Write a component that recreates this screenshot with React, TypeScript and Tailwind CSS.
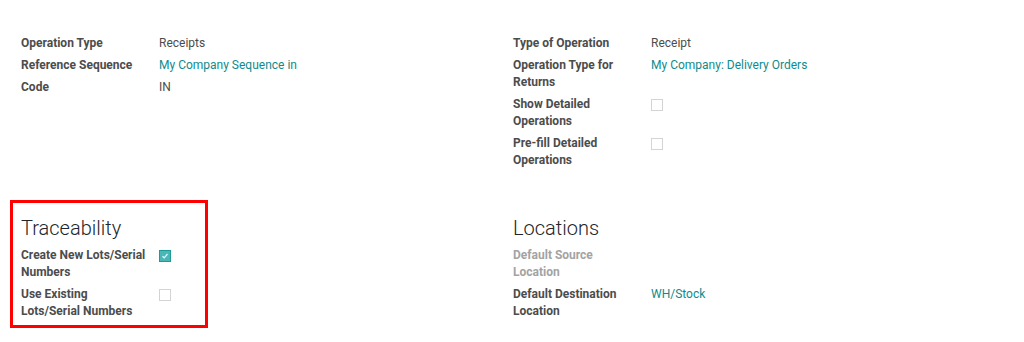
import React from 'react';

type Row = {
  label: string;
  value?: string;
  link?: boolean;
  check?: boolean;
  checked?: boolean;
  muted?: boolean;
};

const TOP_LEFT: Row[] = [
  { label: 'Operation Type', value: 'Receipts' },
  { label: 'Reference Sequence', value: 'My Company Sequence in', link: true },
  { label: 'Code', value: 'IN' },
];

const TOP_RIGHT: Row[] = [
  { label: 'Type of Operation', value: 'Receipt' },
  { label: 'Operation Type for Returns', value: 'My Company: Delivery Orders', link: true },
  { label: 'Show Detailed Operations', check: true },
  { label: 'Pre-fill Detailed Operations', check: true },
];

const TRACE: Row[] = [
  { label: 'Create New Lots/Serial Numbers', check: true, checked: true },
  { label: 'Use Existing Lots/Serial Numbers', check: true },
];

const LOCATIONS: Row[] = [
  { label: 'Default Source Location', muted: true },
  { label: 'Default Destination Location', value: 'WH/Stock', link: true },
];

function Checkbox({ checked }: { checked?: boolean }) {
  if (checked) {
    return (
      <span className="mt-[2.5px] flex h-[12px] w-[12px] items-center justify-center border border-[#1f9a9a] bg-[#4ab6b6]">
        <svg width="8" height="8" viewBox="0 0 8 8" fill="none">
          <path d="M1.5 4.2 L3.2 5.8 L6.5 2" stroke="#e8f6f6" strokeWidth="1.2" />
        </svg>
      </span>
    );
  }
  return <span className="mt-[2.5px] block h-[12px] w-[12px] border border-[#d4d4d4] bg-white" />;
}

function Field({ row }: { row: Row }) {
  return (
    <div className="flex">
      <div
        className={`w-[138px] shrink-0 pr-[13px] font-bold ${row.muted ? 'text-[#a3a3a3]' : 'text-[#4c4c4c]'}`}
      >
        {row.label}
      </div>
      <div className="flex-1">
        {row.check ? (
          <Checkbox checked={row.checked} />
        ) : row.value ? (
          <span className={row.link ? 'text-[#0f8b8d]' : 'text-[#4c4c4c]'}>{row.value}</span>
        ) : null}
      </div>
    </div>
  );
}

function Group({ rows, title }: { rows: Row[]; title?: string }) {
  return (
    <div className="flex flex-col">
      {title && (
        <h2 className="mb-[7px] text-[20px] font-light leading-[24px] text-[#212529]">{title}</h2>
      )}
      <div className="flex flex-col gap-[5px]">
        {rows.map(r => (
          <Field key={r.label} row={r} />
        ))}
      </div>
    </div>
  );
}

export default function App() {
  return (
    <div
      className="h-[342px] w-[1024px] overflow-hidden bg-white pl-[21px] pt-[35px] text-[12px] leading-[17px]"
      style={{ fontFamily: 'Roboto, "Noto Sans", sans-serif' }}
    >
      <div className="grid grid-cols-[492px_1fr]">
        <Group rows={TOP_LEFT} />
        <Group rows={TOP_RIGHT} />
      </div>

      <div className="mt-[47px] grid grid-cols-[492px_1fr]">
        {/* highlighted block */}
        <div className="-ml-[11px] -mt-[16px] w-[198px] self-start border-[3px] border-[#ff0000] pb-[5px] pl-[8px] pt-[13px]">
          <Group rows={TRACE} title="Traceability" />
        </div>
        <Group rows={LOCATIONS} title="Locations" />
      </div>
    </div>
  );
}
